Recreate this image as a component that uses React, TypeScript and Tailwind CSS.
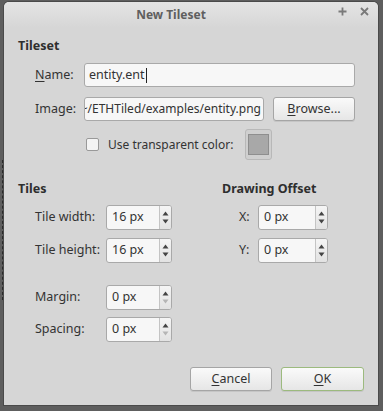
import type { ReactNode } from 'react'

const font = { fontFamily: '"Noto Sans", "Open Sans", sans-serif' }

function Ul({ children }: { children: ReactNode }) {
  return <span className="underline decoration-1 underline-offset-2">{children}</span>
}

function Button({ children, className = '' }: { children: ReactNode, className?: string }) {
  return (
    <div
      className={`flex h-[24px] items-center justify-center rounded-[3px] border bg-gradient-to-b from-[#fafafa] to-[#e6e6e6] text-[12.5px] text-[#333] shadow-[0_1px_0_rgba(0,0,0,0.08)] ${className}`}
    >
      {children}
    </div>
  )
}

function Arrow({ up, dim }: { up?: boolean, dim?: boolean }) {
  return (
    <svg width="7" height="5" viewBox="0 0 7 5" className={dim ? 'text-[#b5b5b5]' : 'text-[#444]'}>
      <path d={up ? 'M0.5 4.5 L3.5 0.5 L6.5 4.5 Z' : 'M0.5 0.5 L3.5 4.5 L6.5 0.5 Z'} fill="currentColor" />
    </svg>
  )
}

function Spin({ value, width, dimDown }: { value: string, width: string, dimDown?: boolean }) {
  return (
    <div className={`flex h-[25px] ${width} overflow-hidden rounded-[3px] border border-[#a9a9a9] bg-[#f7f7f7]`}>
      <div className="flex flex-1 items-center pl-[5px] text-[12.5px] text-[#333]">{value}</div>
      <div className="flex w-[12px] flex-col items-center justify-between border-l border-[#c4c4c4] bg-gradient-to-b from-[#f5f5f5] to-[#e2e2e2] py-[5px]">
        <Arrow up />
        <Arrow dim={dimDown} />
      </div>
    </div>
  )
}

function SpinRow({ label, value, labelWidth, spinWidth, dimDown }: { label: string, value: string, labelWidth: string, spinWidth: string, dimDown?: boolean }) {
  return (
    <div className="flex items-center">
      <div className={`${labelWidth} text-[12.5px] text-[#333]`}>{label}</div>
      <Spin value={value} width={spinWidth} dimDown={dimDown} />
    </div>
  )
}

export default function App() {
  return (
    <div className="relative h-[411px] w-[383px] overflow-hidden bg-[#5e5e5e]" style={font}>
      <div className="absolute left-[2px] top-[160px] h-[140px] border-l border-dashed border-[#2a2a2a]" />
      <div className="ml-[4px] mt-[2px] flex h-[403px] w-[374px] flex-col rounded-t-[5px] bg-[#d6d6d6] shadow-[0_0_0_1px_#4a4a4a]">
        {/* title bar */}
        <div className="relative flex h-[26px] items-center justify-center rounded-t-[5px] bg-gradient-to-b from-[#e4e4e4] to-[#d6d6d6] pr-[40px]">
          <span className="text-[12px] font-bold text-[#5f5f5f]">New Tileset</span>
          <div className="absolute right-[9px] top-[5px] flex items-center gap-[13px] text-[#7a7a7a]">
            <svg width="9" height="9" viewBox="0 0 9 9">
              <path d="M4.5 0.5 V8.5 M0.5 4.5 H8.5" stroke="currentColor" strokeWidth="1.8" />
            </svg>
            <svg width="9" height="9" viewBox="0 0 9 9">
              <path d="M1 1 L8 8 M8 1 L1 8" stroke="currentColor" strokeWidth="1.8" />
            </svg>
          </div>
        </div>

        <div className="flex flex-1 flex-col pl-[14px] pr-[22px] text-[#333]">
          <div className="mt-[9px] text-[12.5px] font-bold leading-[18px] text-[#2e2e2e]">Tileset</div>

          <div className="mt-[8px] flex items-center">
            <div className="w-[66px] pl-[17px] text-[12.5px]"><Ul>N</Ul>ame:</div>
            <div className="flex h-[24px] w-[271px] items-center rounded-[3px] border border-[#a9a9a9] bg-[#f7f7f7] pl-[4px] text-[12.5px]">
              entity.ent
              <span className="ml-px h-[15px] w-px bg-[#222]" />
            </div>
          </div>

          <div className="mt-[10px] flex items-center">
            <div className="w-[66px] pl-[17px] text-[12.5px]">Image:</div>
            <div className="relative h-[24px] w-[180px] overflow-hidden rounded-[3px] border border-[#a9a9a9] bg-[#f7f7f7] text-[12px]">
              <span className="absolute right-[2px] top-1/2 -translate-y-1/2 whitespace-nowrap">~/ETHTiled/examples/entity.png</span>
            </div>
            <Button className="ml-[9px] w-[82px] border-[#a5a5a5]"><Ul>B</Ul>rowse...</Button>
          </div>

          <div className="mt-[8px] flex items-center">
            <div className="ml-[68px] h-[13px] w-[13px] rounded-[2px] border border-[#999] bg-[#f4f4f4]" />
            <div className="ml-[9px] text-[12px]">Use transparent color:</div>
            <div className="ml-[12px] flex h-[31px] w-[27px] items-center justify-center rounded-[3px] border border-[#b8b8b8] bg-[#cfcfcf]">
              <div className="h-[21px] w-[21px] border border-[#8e8e8e] bg-[#a8a8a8]" />
            </div>
          </div>

          <div className="mt-[20px] flex">
            <div className="flex w-[204px] flex-col">
              <div className="text-[12.5px] font-bold leading-[18px] text-[#2e2e2e]">Tiles</div>
              <div className="mt-[7px] flex flex-col gap-[8px]">
                <SpinRow label="Tile width:" value="16 px" labelWidth="w-[88px] pl-[17px]" spinWidth="w-[66px]" />
                <SpinRow label="Tile height:" value="16 px" labelWidth="w-[88px] pl-[17px]" spinWidth="w-[66px]" />
              </div>
              <div className="mt-[22px] flex flex-col gap-[7px]">
                <SpinRow label="Margin:" value="0 px" labelWidth="w-[88px] pl-[17px]" spinWidth="w-[66px]" dimDown />
                <SpinRow label="Spacing:" value="0 px" labelWidth="w-[88px] pl-[17px]" spinWidth="w-[66px]" dimDown />
              </div>
            </div>
            <div className="flex flex-col">
              <div className="text-[12.5px] font-bold leading-[18px] text-[#2e2e2e]">Drawing Offset</div>
              <div className="mt-[7px] flex flex-col gap-[8px]">
                <SpinRow label="X:" value="0 px" labelWidth="w-[36px] pl-[17px]" spinWidth="w-[70px]" />
                <SpinRow label="Y:" value="0 px" labelWidth="w-[36px] pl-[17px]" spinWidth="w-[70px]" />
              </div>
            </div>
          </div>

          <div className="mt-[25px] flex justify-end gap-[9px]">
            <Button className="w-[82px] border-[#a5a5a5]"><Ul>C</Ul>ancel</Button>
            <Button className="mr-[-8px] w-[83px] border-[#9cba7e]"><Ul>O</Ul>K</Button>
          </div>
        </div>
      </div>
    </div>
  )
}
